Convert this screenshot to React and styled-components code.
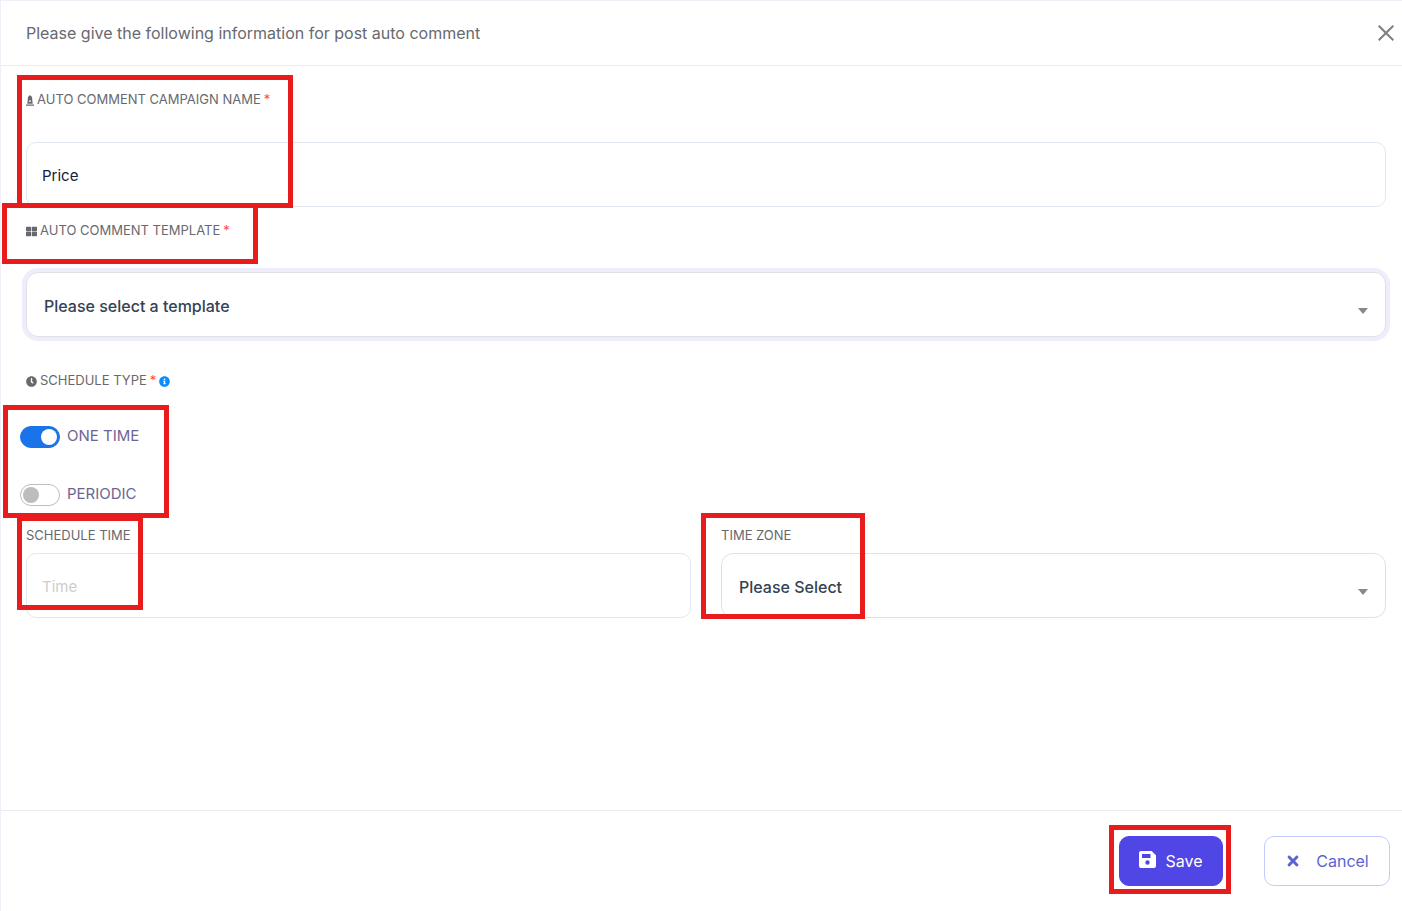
import React, { useState } from "react";
import styled, { createGlobalStyle, css } from "styled-components";
import { FaClock, FaInfoCircle, FaMonument, FaThLarge, FaTimes } from "react-icons/fa";

const GlobalStyle = createGlobalStyle`
    * {
        box-sizing: border-box;
    }

    body {
        margin: 0;
        background-color: #fff;
    }

    body, button, input, select {
        font-family: Inter, "Liberation Sans", sans-serif;
    }
`;

const Modal = styled.form`
    min-height: 100vh;
    display: flex;
    flex-direction: column;
    border-top: 1px solid #edf0f6;
    border-left: 1px solid #edf0f6;
    color: #67696e;
`;

const ModalHeader = styled.header`
    display: flex;
    align-items: center;
    justify-content: space-between;
    height: 65px;
    padding: 0 8px 0 25px;
    border-bottom: 1px solid #e9ebee;
`;

const ModalTitle = styled.h1`
    margin: 0;
    font-size: 16px;
    font-weight: 400;
    line-height: 24px;
`;

const CloseButton = styled.button`
    display: flex;
    padding: 0;
    border: none;
    background: none;
    color: #7f7f7f;
    cursor: pointer;
`;

const ModalBody = styled.main`
    flex: 1;
    padding: 23px 16px 24px 25px;
`;

const Field = styled.div`
    position: relative;
    display: flex;
    flex-direction: column;
    gap: ${(props) => props.$gap || 32}px;
    margin-bottom: ${(props) => props.$bottom || 0}px;
`;

const labelText = css`
    display: flex;
    align-items: center;
    gap: 3px;
    font-size: 13px;
    font-weight: 400;
    line-height: 20px;
    text-transform: uppercase;
    white-space: nowrap;

    svg {
        flex: none;
        margin-top: 3px;
    }
`;

const Label = styled.label`
    ${labelText}
`;

const Legend = styled.legend`
    ${labelText}
    padding: 0;
`;

const Required = styled.span`
    color: #ff4b4b;
`;

const CampaignIcon = styled(FaMonument)`
    width: 8px;
    height: 11px;
`;

const InfoIcon = styled(FaInfoCircle)`
    color: #0d8bf9;
`;

const TextInput = styled.input`
    width: 100%;
    height: 65px;
    padding: 2px 15px 0;
    border: 1px solid #e2e8f0;
    border-radius: 10px;
    background-color: #fff;
    color: #16203a;
    font-size: 15px;
    outline: none;

    &::placeholder {
        color: #cdcdcd;
    }
`;

const SelectWrap = styled.div`
    display: grid;
    align-items: center;

    > * {
        grid-area: 1 / 1;
    }
`;

const SelectBox = styled.select`
    appearance: none;
    width: 100%;
    height: 65px;
    padding: 3px 40px 0 17px;
    border: 1px solid #dee2e6;
    border-radius: 12px;
    background-color: #fff;
    color: #344256;
    font-size: 16px;
    font-weight: 500;
    outline: none;
    box-shadow: ${(props) => (props.$active ? "0 0 0 4px #eeedfc" : "none")};
`;

const Caret = styled.span`
    justify-self: end;
    margin: 13px 18px 0 0;
    border: 5px solid transparent;
    border-top: 6px solid #888;
    border-bottom: none;
    pointer-events: none;
`;

const ScheduleType = styled.fieldset`
    margin: 0;
    padding: 0;
    border: none;
`;

const SwitchList = styled.div`
    position: relative;
    display: flex;
    flex-direction: column;
    gap: 34px;
    margin: 34px 0 19px -6px;
`;

const SwitchLabel = styled.label`
    display: flex;
    align-items: center;
    gap: 7px;
    color: #6d6594;
    font-size: 15px;
    line-height: 24px;
    text-transform: uppercase;
`;

const Switch = styled.input`
    appearance: none;
    display: flex;
    align-items: center;
    width: 40px;
    height: 22px;
    margin: 2px 0 0;
    padding: 0 2px;
    border: 1px solid #bdbdbd;
    border-radius: 11px;
    background-color: #fff;

    &::before {
        content: "";
        width: 16px;
        height: 16px;
        border-radius: 50%;
        background-color: #bdbdbd;
    }

    &:checked {
        justify-content: flex-end;
        border-color: #1a73e8;
        background-color: #1a73e8;
    }

    &:checked::before {
        background-color: #fff;
    }
`;

const Columns = styled.div`
    display: grid;
    grid-template-columns: 1fr 1fr;
    gap: 30px;
`;

const ModalFooter = styled.footer`
    display: flex;
    align-items: center;
    justify-content: flex-end;
    gap: 41px;
    height: 101px;
    padding: 0 12px;
    border-top: 1px solid #e9ebee;
`;

const SaveWrap = styled.div`
    position: relative;
`;

const Button = styled.button`
    display: flex;
    align-items: center;
    justify-content: center;
    height: 50px;
    padding: 0 18px;
    border: 1px solid;
    border-radius: 10px;
    font-size: 16px;
    cursor: pointer;
`;

const SaveButton = styled(Button)`
    gap: 9px;
    min-width: 104px;
    border-color: #4f46e5;
    background-color: #4f46e5;
    color: #fff;

    svg {
        margin-bottom: 3px;
    }
`;

const CancelButton = styled(Button)`
    gap: 15px;
    min-width: 126px;
    border-color: #c3ccfa;
    background-color: #fff;
    color: #5b63d3;
`;

// red frame drawn over the part of the form it points out
const Highlight = styled.span`
    position: absolute;
    top: ${(props) => props.$top}px;
    left: ${(props) => props.$left}px;
    width: ${(props) => props.$width}px;
    height: ${(props) => props.$height}px;
    border: 5px solid #e81c1c;
    pointer-events: none;
    z-index: 2;
`;

const CloseIcon = () => (
    <svg width="16" height="16" viewBox="0 0 16 16" fill="none" stroke="currentColor" strokeWidth="2">
        <path d="M0.7 0.7L15.3 15.3M15.3 0.7L0.7 15.3" />
    </svg>
);

const SaveIcon = () => (
    <svg width="17" height="17" viewBox="0 0 17 17" fill="currentColor" fillRule="evenodd">
        <path d="M2 0H12.6L17 4.2V15a2 2 0 0 1-2 2H2a2 2 0 0 1-2-2V2a2 2 0 0 1 2-2ZM3 3V7H11.5V3ZM8.5 9.3a2.2 2.2 0 1 0 0 4.4a2.2 2.2 0 1 0 0-4.4Z" />
    </svg>
);

const Select = ({ id, placeholder, active }) => (
    <SelectWrap>
        <SelectBox id={id} $active={active}>
            <option>{placeholder}</option>
        </SelectBox>
        <Caret />
    </SelectWrap>
);

const App = () => {
    const [name, setName] = useState("Price");
    const [schedule, setSchedule] = useState("onetime");

    return (
        <>
            <GlobalStyle />
            <Modal onSubmit={(e) => e.preventDefault()}>
                <ModalHeader>
                    <ModalTitle>Please give the following information for post auto comment</ModalTitle>
                    <CloseButton type="button" aria-label="Close">
                        <CloseIcon />
                    </CloseButton>
                </ModalHeader>
                <ModalBody>
                    <Field $gap={33} $bottom={13}>
                        <Label htmlFor="campaign">
                            <CampaignIcon />
                            Auto comment campaign name <Required>*</Required>
                        </Label>
                        <TextInput id="campaign" value={name} onChange={(e) => setName(e.target.value)} />
                        <Highlight $top={-14} $left={-9} $width={276} $height={133} />
                    </Field>
                    <Field $bottom={33}>
                        <Label htmlFor="template">
                            <FaThLarge size={11} />
                            Auto comment template <Required>*</Required>
                        </Label>
                        <Select id="template" placeholder="Please select a template" active />
                        <Highlight $top={-17} $left={-24} $width={256} $height={61} />
                    </Field>
                    <ScheduleType>
                        <Legend>
                            <FaClock size={11} />
                            Schedule type <Required>*</Required>
                            <InfoIcon size={11} />
                        </Legend>
                        <SwitchList>
                            <SwitchLabel>
                                <Switch
                                    type="radio"
                                    name="schedule"
                                    checked={schedule === "onetime"}
                                    onChange={() => setSchedule("onetime")}
                                />
                                One time
                            </SwitchLabel>
                            <SwitchLabel>
                                <Switch
                                    type="radio"
                                    name="schedule"
                                    checked={schedule === "periodic"}
                                    onChange={() => setSchedule("periodic")}
                                />
                                Periodic
                            </SwitchLabel>
                            <Highlight $top={-19} $left={-17} $width={166} $height={113} />
                        </SwitchList>
                    </ScheduleType>
                    <Columns>
                        <Field $gap={8}>
                            <Label htmlFor="time">Schedule time</Label>
                            <TextInput id="time" placeholder="Time" />
                            <Highlight $top={-9} $left={-9} $width={126} $height={94} />
                        </Field>
                        <Field $gap={8}>
                            <Label htmlFor="zone">Time zone</Label>
                            <Select id="zone" placeholder="Please Select" />
                            <Highlight $top={-12} $left={-20} $width={164} $height={106} />
                        </Field>
                    </Columns>
                </ModalBody>
                <ModalFooter>
                    <SaveWrap>
                        <SaveButton type="submit">
                            <SaveIcon />
                            Save
                        </SaveButton>
                        <Highlight $top={-11} $left={-10} $width={122} $height={69} />
                    </SaveWrap>
                    <CancelButton type="button">
                        <FaTimes size={16} />
                        Cancel
                    </CancelButton>
                </ModalFooter>
            </Modal>
        </>
    );
};

export default App;
